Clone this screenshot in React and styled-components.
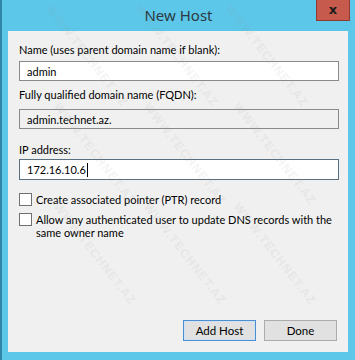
import React from "react";
import styled, { createGlobalStyle } from "styled-components";

const GlobalStyle = createGlobalStyle`
  html, body {
    margin: 0;
    padding: 0;
    background: #5bc6e8;
  }
  * { box-sizing: border-box; }
`;

const Window = styled.div`
  position: relative;
  width: 355px;
  height: 360px;
  display: flex;
  flex-direction: column;
  background: #5cc7e9;
  border-left: 2px solid #2f86a8;
  font-family: "Noto Sans", "Open Sans", sans-serif;
  overflow: hidden;
`;

const TitleBar = styled.div`
  height: 31px;
  display: grid;
  grid-template-columns: 1fr auto 1fr;
  align-items: start;
`;

const Title = styled.div`
  grid-column: 2;
  padding-top: 5px;
  font-size: 15px;
  color: #2b3a42;
`;

const CloseButton = styled.div`
  grid-column: 3;
  justify-self: end;
  margin-right: 5px;
  width: 34px;
  height: 21px;
  background: #c65a4c;
  border: 1px solid #8f3a30;
  border-top: none;
  display: flex;
  align-items: center;
  justify-content: center;
  font-family: "DejaVu Sans", sans-serif;
  font-weight: bold;
  font-size: 13px;
  color: #1c1c1c;
  line-height: 1;
  padding-bottom: 2px;
`;

const Client = styled.div`
  flex: 1;
  margin: 0 7px 8px 6px;
  background: #f0f0f0;
  padding: 11px 9px 11px 11px;
  display: flex;
  flex-direction: column;
  font-family: Lato, "Noto Sans", sans-serif;
  font-size: 11px;
  color: #000;
`;

const Label = styled.div`
  line-height: 16px;
  margin-bottom: ${(p) => p.$gap ?? 3}px;
`;

const Field = styled.div`
  flex: none;
  height: ${(p) => p.$h || 20}px;
  border: 1px solid ${(p) => (p.$focused ? "#5a6f80" : "#8a8a8a")};
  background: ${(p) => (p.$readOnly ? "#f0f0f0" : "#fff")};
  padding: 0 7px;
  display: flex;
  align-items: center;
  margin-bottom: ${(p) => p.$gap ?? 6}px;
  color: #000;
`;

const Caret = styled.span`
  display: inline-block;
  width: 1px;
  height: 14px;
  background: #000;
  margin-left: 1px;
`;

const CheckRow = styled.label`
  display: flex;
  align-items: flex-start;
  gap: 4px;
  line-height: 13px;
  margin-top: ${(p) => p.$top || 0}px;
`;

const Box = styled.span`
  flex: none;
  width: 13px;
  height: 13px;
  border: 1px solid #707070;
  background: #fff;
`;

const Buttons = styled.div`
  margin-top: auto;
  display: flex;
  justify-content: flex-end;
  gap: 8px;
  padding-right: 2px;
  font-size: 11.5px;
`;

const Button = styled.div`
  width: 73px;
  height: 21px;
  display: flex;
  align-items: center;
  justify-content: center;
  background: #e1e1e1;
  border: 1px solid ${(p) => (p.$default ? "#4f8fd0" : "#acacac")};
  box-shadow: ${(p) => (p.$default ? "inset 0 0 0 1px #cfe2f5" : "none")};
  color: #000;
`;

const Watermark = styled.div`
  position: absolute;
  font-family: "Liberation Sans", sans-serif;
  font-weight: bold;
  font-size: 12px;
  letter-spacing: 1px;
  color: #9a9a9a;
  opacity: 0.1;
  transform: rotate(52deg);
  transform-origin: left top;
  white-space: nowrap;
  pointer-events: none;
`;

const marks = [
  [52, 2], [142, 2], [232, 2],
  [60, 100], [150, 100], [240, 100],
  [60, 200], [150, 200], [240, 200],
];

export default function App() {
  return (
    <>
      <GlobalStyle />
      <Window>
        <TitleBar>
          <Title>New Host</Title>
          <CloseButton>x</CloseButton>
        </TitleBar>
        <Client>
          <Label>Name (uses parent domain name if blank):</Label>
          <Field>admin</Field>
          <Label $gap={6}>Fully qualified domain name (FQDN):</Label>
          <Field $readOnly $gap={13}>admin.technet.az.</Field>
          <Label $gap={1}>IP address:</Label>
          <Field $focused $h={21} $gap={13}>
            172.16.10.6
            <Caret />
          </Field>
          <CheckRow>
            <Box />
            <span>Create associated pointer (PTR) record</span>
          </CheckRow>
          <CheckRow $top={7}>
            <Box />
            <span>
              Allow any authenticated user to update DNS records with the
              same owner name
            </span>
          </CheckRow>
          <Buttons>
            <Button $default>Add Host</Button>
            <Button>Done</Button>
          </Buttons>
        </Client>
        {marks.map(([x, y], i) => (
          <Watermark key={i} style={{ left: x, top: y }}>
            WWW.TECHNET.AZ
          </Watermark>
        ))}
      </Window>
    </>
  );
}
